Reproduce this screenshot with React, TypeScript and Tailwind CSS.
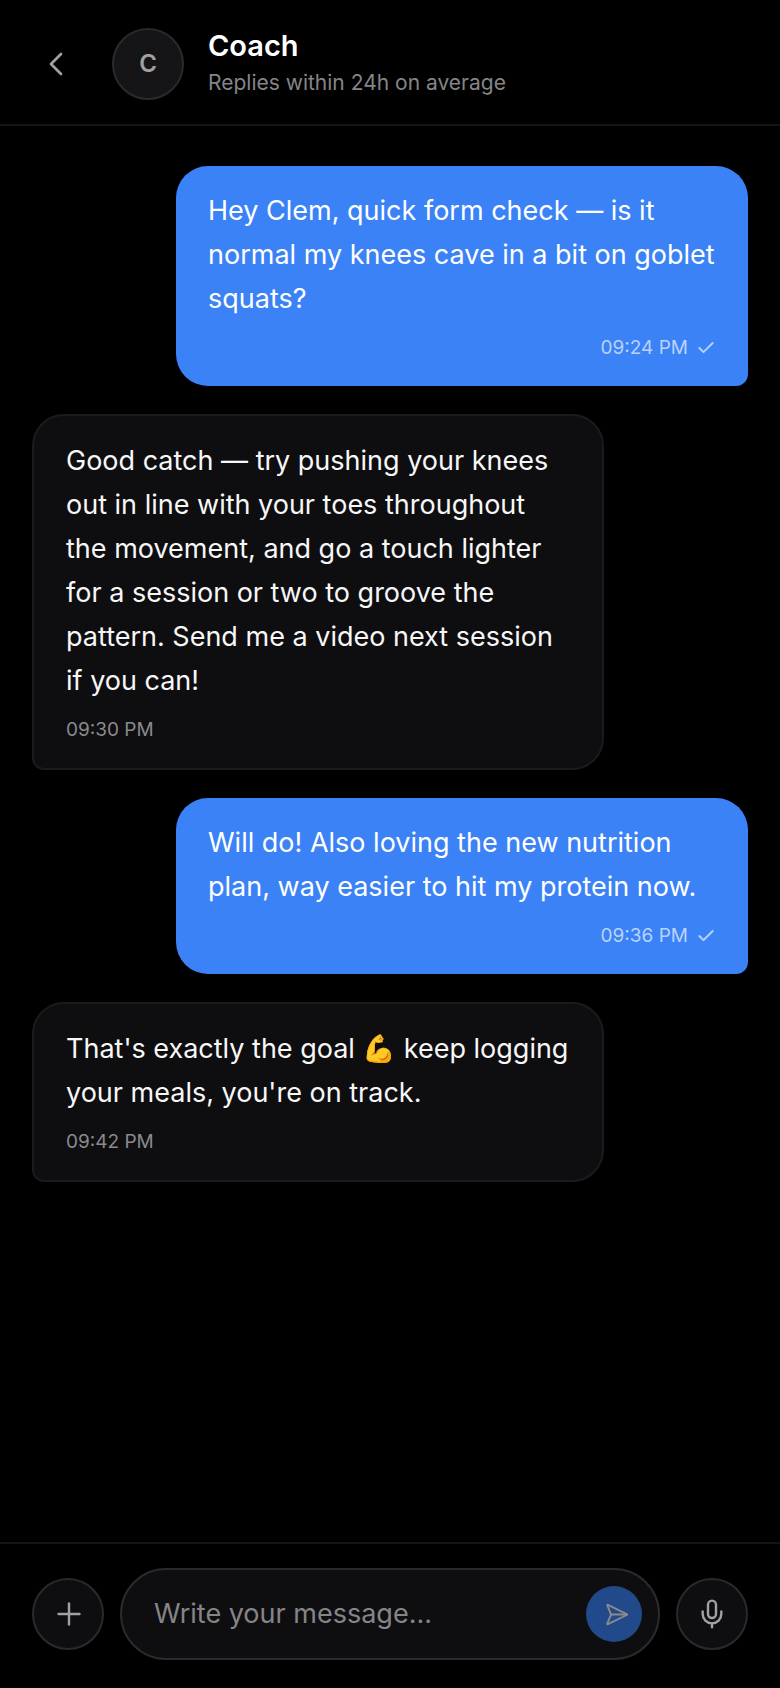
import { ChevronLeft, Check, Plus, Send, Mic } from "lucide-react";

const font = { fontFamily: "Inter, 'Noto Color Emoji', sans-serif" };

function Out({ text, time }: { text: string; time: string }) {
  return (
    <div className="self-end w-[572px] bg-[#3b82f6] rounded-[32px] rounded-br-[12px] px-8 pt-[23px] pb-6 text-white">
      <p className="text-[27px] leading-[44px]">{text}</p>
      <div className="mt-[13px] flex items-center justify-end gap-2 text-[#b9d3fb] text-[19px] leading-[28px]">
        <span>{time}</span>
        <Check size={20} strokeWidth={2.3} />
      </div>
    </div>
  );
}

function In({ text, time }: { text: React.ReactNode; time: string }) {
  return (
    <div className="self-start w-[572px] bg-[#0e0e10] border-2 border-[#1b1b1d] rounded-[32px] rounded-bl-[12px] px-8 pt-[23px] pb-6 text-[#f7f7f7]">
      <p className="text-[27px] leading-[44px]">{text}</p>
      <div className="mt-[13px] text-[#8a8a8d] text-[19px] leading-[28px]">{time}</div>
    </div>
  );
}

export default function App() {
  return (
    <div style={font} className="w-[780px] h-[1688px] bg-black flex flex-col">
      <header className="h-[126px] shrink-0 border-b-2 border-[#141414] flex items-center pl-8 pr-8 pt-[3px]">
        <ChevronLeft size={40} strokeWidth={1.6} className="text-[#a1a1a4] ml-[4px]" />
        <div className="ml-[36px] w-[72px] h-[72px] rounded-full bg-[#151517] border-2 border-[#2a2a2c] flex items-center justify-center text-[#a1a1a4] text-[24px] font-semibold">
          C
        </div>
        <div className="ml-[24px] flex flex-col -mt-[3px]">
          <span className="text-[29px] leading-[40px] font-semibold text-white">Coach</span>
          <span className="text-[21px] leading-[32px] mt-px text-[#858588]">Replies within 24h on average</span>
        </div>
      </header>
      <main className="flex-1 flex flex-col gap-7 px-8 pt-10">
        <Out text="Hey Clem, quick form check — is it normal my knees cave in a bit on goblet squats?" time="09:24 PM" />
        <In
          text="Good catch — try pushing your knees out in line with your toes throughout the movement, and go a touch lighter for a session or two to groove the pattern. Send me a video next session if you can!"
          time="09:30 PM"
        />
        <Out text="Will do! Also loving the new nutrition plan, way easier to hit my protein now." time="09:36 PM" />
        <In text="That's exactly the goal 💪 keep logging your meals, you're on track." time="09:42 PM" />
      </main>
      <footer className="h-[146px] shrink-0 border-t-2 border-[#141414] flex items-center gap-4 px-8 pt-6 pb-7">
        <div className="w-[72px] h-[72px] shrink-0 rounded-full bg-[#0e0e10] border-2 border-[#2a2a2c] flex items-center justify-center text-[#a1a1a4]">
          <Plus size={36} strokeWidth={1.6} className="ml-[2px]" />
        </div>
        <div className="flex-1 h-[92px] rounded-[46px] bg-[#0e0e10] border-2 border-[#2a2a2c] flex items-center pl-8 pr-4">
          <span className="flex-1 text-[27px] text-[#858588]">Write your message...</span>
          <div className="w-14 h-14 rounded-full bg-[#224a8a] flex items-center justify-center text-[#8a8a8e]">
            <Send size={25} strokeWidth={1.8} className="rotate-45 -ml-1" />
          </div>
        </div>
        <div className="w-[72px] h-[72px] shrink-0 rounded-full bg-[#0e0e10] border-2 border-[#2a2a2c] flex items-center justify-center text-[#a1a1a4]">
          <Mic size={32} strokeWidth={1.8} />
        </div>
      </footer>
    </div>
  );
}
